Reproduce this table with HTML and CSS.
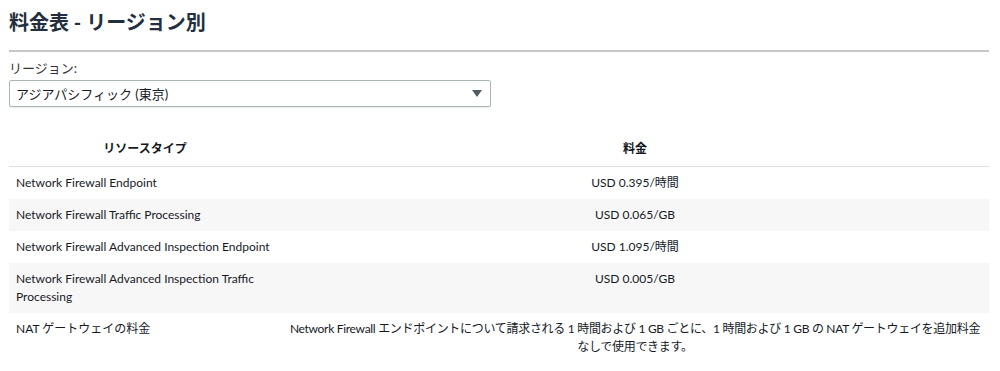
FILE: index.html
```html
<!DOCTYPE html>
<html lang="ja">
<head>
<meta charset="utf-8">
<link rel="stylesheet" href="styles.css">
</head>
<body>
<div class="page">
  <h2 class="title">料金表 - リージョン別</h2>
  <hr class="rule">
  <label class="label">リージョン:</label>
  <div class="select">
    <span class="select-text">アジアパシフィック (東京)</span>
    <span class="caret"></span>
  </div>
  <table class="pricing">
    <thead>
      <tr><th class="c1">リソースタイプ</th><th class="c2">料金</th></tr>
    </thead>
    <tbody>
      <tr><td class="c1">Network Firewall Endpoint</td><td class="c2">USD 0.395/時間</td></tr>
      <tr class="alt"><td class="c1">Network Firewall Traffic Processing</td><td class="c2">USD 0.065/GB</td></tr>
      <tr><td class="c1">Network Firewall Advanced Inspection Endpoint</td><td class="c2">USD 1.095/時間</td></tr>
      <tr class="alt"><td class="c1">Network Firewall Advanced Inspection Traffic Processing</td><td class="c2">USD 0.005/GB</td></tr>
      <tr><td class="c1">NAT ゲートウェイの料金</td><td class="c2 note">Network Firewall エンドポイントについて請求される 1 時間および 1 GB ごとに、1 時間および 1 GB の NAT ゲートウェイを追加料金なしで使用できます。</td></tr>
    </tbody>
  </table>
</div>
</body>
</html>
```

FILE: styles.css
```css
html, body {
  margin: 0;
  padding: 0;
  background: #ffffff;
}
body {
  font-family: "Lato", "Noto Sans CJK JP", sans-serif;
  color: #16191f;
}
.page {
  padding: 0 11px 0 9px;
}
.title {
  margin: 0;
  padding-top: 10px;
  font-size: 20px;
  line-height: 24px;
  font-weight: 700;
  color: #232f3e;
}
.rule {
  margin: 16px 0 0 0;
  border: 0;
  height: 2px;
  background: #c6c6c6;
}
.label {
  display: block;
  margin-top: 8px;
  font-size: 13px;
  line-height: 17px;
  color: #333;
}
.select {
  margin-top: 3px;
  height: 25px;
  border: 1px solid #aab7b8;
  border-radius: 2px;
  display: flex;
  align-items: center;
  justify-content: space-between;
  padding: 0 8px 0 6px;
  box-sizing: content-box;
  width: 466px;
  box-shadow: 0 1px 1px rgba(0,0,0,0.08);
}
.select-text {
  font-size: 13px;
  color: #16191f;
}
.caret {
  width: 0;
  height: 0;
  border-left: 5px solid transparent;
  border-right: 5px solid transparent;
  border-top: 7px solid #545b64;
}
.pricing {
  margin-top: 24px;
  width: 100%;
  border-collapse: collapse;
  font-size: 12px;
  line-height: 18px;
}
.pricing th {
  font-weight: 700;
  padding: 9px 7px 8px;
  border-bottom: 1px solid #e1e1e1;
  text-align: center;
}
.pricing td {
  padding: 7px 7px 7px 7px;
  vertical-align: top;
}
.pricing td.c1 {
  width: 258px;
  text-align: left;
}
.pricing td.c2 {
  text-align: center;
}
.pricing td.note {
  letter-spacing: -0.3px;
  padding-left: 6px;
  padding-right: 6px;
}
.pricing th.c1 {
  width: 258px;
}
.pricing tr.alt td {
  background: #f7f7f7;
}
.pricing tbody tr:last-child td {
  border-bottom: 1px solid #e1e1e1;
  padding-bottom: 16px;
}
```
